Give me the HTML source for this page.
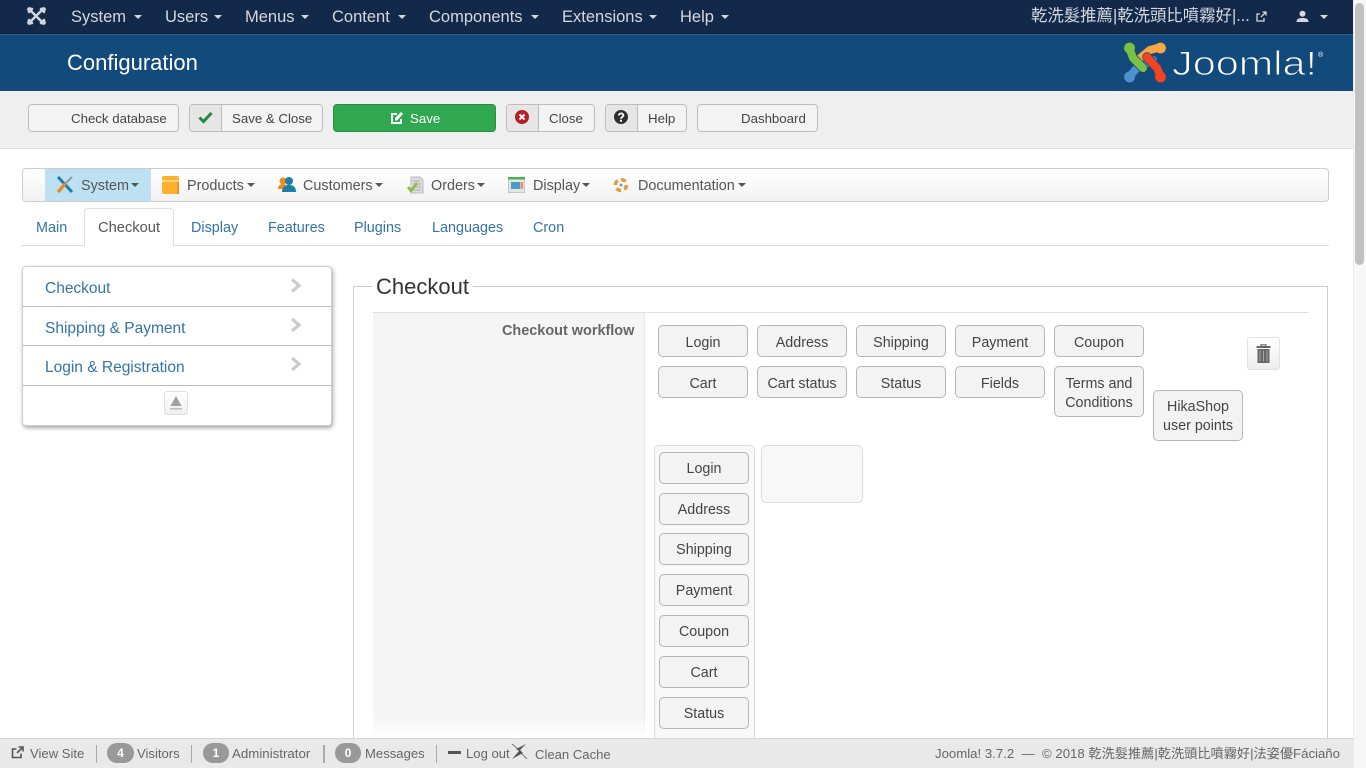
<!DOCTYPE html>
<html><head><meta charset="utf-8"><title>Configuration</title>
<style>
html,body{margin:0;padding:0;width:1366px;height:768px;overflow:hidden;background:#fff}
body{position:relative;font-family:"Liberation Sans","Noto Sans CJK TC",sans-serif;color:#333}
div,span,svg{position:absolute;box-sizing:border-box}
.t{white-space:nowrap}
.n{top:6px;height:22px;line-height:22px;font-size:16.5px;color:#d4d8df;white-space:nowrap}
.car{width:0;height:0;border-left:4.5px solid transparent;border-right:4.5px solid transparent;border-top:4.5px solid #d4d8df}
.tb{top:104px;height:28px;background:#f3f3f3;border:1px solid #bdbdbd;border-radius:4px}
.tbt{top:104px;height:28px;line-height:29px;font-size:13.25px;color:#444;white-space:nowrap}
.ic{top:105px;height:26px;width:32px;background:#e6e6e6;border-right:1px solid #bdbdbd;border-radius:3px 0 0 3px}
.sm{top:176px;height:20px;line-height:20px;font-size:14.4px;color:#555;white-space:nowrap}
.car2{top:183px;width:0;height:0;border-left:4.5px solid transparent;border-right:4.5px solid transparent;border-top:4.5px solid #555}
.tab{top:218px;height:20px;line-height:20px;font-size:14.4px;color:#3373a8;white-space:nowrap}
.sd{left:45px;height:20px;line-height:20px;font-size:15.5px;color:#3373a8;white-space:nowrap}
.hr{left:23px;width:308px;height:1px;background:#bbb}
.b{width:90px;height:32px;background:#f3f3f3;border:1px solid #b5b5b5;border-radius:5px;text-align:center;font-size:14.3px;line-height:32px;color:#444}
.r{line-height:34px}
.b2{height:51px;line-height:19px;padding-top:8px}
.f{top:744px;height:20px;line-height:20px;font-size:13.1px;color:#666;white-space:nowrap}
.bd{top:743px;height:20px;width:27px;border-radius:10px;background:#999;color:#fff;font-size:12px;font-weight:bold;line-height:20px;text-align:center}
.sp{top:745px;width:1px;height:18px;background:#aaa}
</style></head><body>

<!-- top nav -->
<div style="left:0;top:0;width:1353px;height:33px;background:#13294a"></div>
<div style="left:0;top:33px;width:1353px;height:1px;background:#0b1a30"></div>
<svg style="left:26px;top:6px" width="21" height="20" viewBox="0 0 21 20"><g fill="none" stroke="#d0d4da" stroke-width="2.6" stroke-linecap="round"><path d="M4 4 L16 16M16 4 L4 16M3 6 L6 3M15 3l3 3M3 14l3 3M15 17l3-3"/></g><circle cx="3.5" cy="3.5" r="2.4" fill="#d0d4da"/><circle cx="17.5" cy="3.5" r="2.4" fill="#d0d4da"/><circle cx="3.5" cy="16.5" r="2.4" fill="#d0d4da"/><circle cx="17.5" cy="16.5" r="2.4" fill="#d0d4da"/></svg>
<div class="n" style="left:71px">System</div><div class="car" style="left:134px;top:15px"></div>
<div class="n" style="left:165px">Users</div><div class="car" style="left:214px;top:15px"></div>
<div class="n" style="left:245px">Menus</div><div class="car" style="left:301px;top:15px"></div>
<div class="n" style="left:332px">Content</div><div class="car" style="left:398px;top:15px"></div>
<div class="n" style="left:429px">Components</div><div class="car" style="left:531px;top:15px"></div>
<div class="n" style="left:562px">Extensions</div><div class="car" style="left:649px;top:15px"></div>
<div class="n" style="left:680px">Help</div><div class="car" style="left:721px;top:15px"></div>
<div class="n" style="left:1031px;font-size:16.4px;top:5px">乾洗髮推薦|乾洗頭比噴霧好|...</div>
<svg style="left:1255px;top:11px" width="12" height="12" viewBox="0 0 12 12"><path d="M9 7v3H2V3h3M6 6l4.500-4.500M7.500 1H11v3.500" fill="none" stroke="#d4d8df" stroke-width="1.300"/></svg>
<svg style="left:1296px;top:10px" width="13" height="13" viewBox="0 0 13 13"><circle cx="6.500" cy="3.800" r="3" fill="#d4d8df"/><path d="M0.500 12c0-3 2-4 6-4s6 1 6 4z" fill="#d4d8df"/></svg>
<div class="car" style="left:1320px;top:15px"></div>

<!-- header -->
<div style="left:0;top:34px;width:1353px;height:57px;background:#134a7c;border-top:1px solid #2a6496"></div>
<div class="t" style="left:67px;top:49px;height:28px;line-height:28px;font-size:22px;color:#fff">Configuration</div>
<svg style="left:1124px;top:42px" width="42" height="41" viewBox="0 0 42 41">
<g fill="none" stroke-linecap="round" stroke-linejoin="round">
<path d="M5 35 L13 26 L29 18" stroke="#4f91cd" stroke-width="8"/>
<path d="M37 5 L26 8 L14 18" stroke="#134a7c" stroke-width="9.500"/>
<path d="M37 5 L26 8 L14 18" stroke="#f9a541" stroke-width="8"/>
<path d="M37 35 L33 26 L23 15" stroke="#134a7c" stroke-width="9.500"/>
<path d="M37 35 L33 26 L23 15" stroke="#f44321" stroke-width="8"/>
<path d="M5 5 L9 16 L19 26" stroke="#134a7c" stroke-width="9.500"/>
<path d="M5 5 L9 16 L19 26" stroke="#7ac143" stroke-width="8"/>
</g>
<circle cx="5.500" cy="6" r="5.400" fill="#7ac143"/><circle cx="36.500" cy="6" r="5.400" fill="#f9a541"/><circle cx="36.500" cy="35" r="5.400" fill="#f44321"/><circle cx="5.500" cy="35" r="5.400" fill="#4f91cd"/>
</svg>
<svg style="left:1170px;top:44px" width="158" height="36" viewBox="0 0 158 36"><text x="2" y="31" style="font-family:'Liberation Sans',sans-serif" font-size="34" fill="#fff" stroke="#134a7c" stroke-width="1" textLength="145" lengthAdjust="spacingAndGlyphs">Joomla!</text><text x="148" y="13" style="font-family:'Liberation Sans',sans-serif" font-size="7" fill="#fff">®</text></svg>

<!-- toolbar -->
<div style="left:0;top:91px;width:1353px;height:58px;background:#efefef;border-bottom:1px solid #ddd"></div>
<div class="tb" style="left:28px;width:151px"></div><div class="tbt" style="left:71px">Check database</div>
<div class="tb" style="left:189px;width:134px"></div><div class="ic" style="left:190px"></div>
<svg style="left:198px;top:111px" width="15" height="13" viewBox="0 0 15 13"><path d="M1.500 6.500l4 4 8-8.500" fill="none" stroke="#1f8a3e" stroke-width="3"/></svg>
<div class="tbt" style="left:232px">Save &amp; Close</div>
<div class="tb" style="left:333px;width:163px;background:#2fa84f;border-color:#26903f"></div>
<svg style="left:390px;top:111px" width="14" height="14" viewBox="0 0 14 14"><path d="M11 8v4H2V3h5" fill="none" stroke="#fff" stroke-width="2"/><path d="M5 9.500V7l6-6 2 2-6 6.500z" fill="#fff"/></svg>
<div class="tbt" style="left:410px;color:#fff">Save</div>
<div class="tb" style="left:506px;width:89px"></div><div class="ic" style="left:507px"></div>
<svg style="left:515px;top:110px" width="14" height="14" viewBox="0 0 14 14"><circle cx="7" cy="7" r="7" fill="#b32028"/><path d="M4.500 4.500l5 5M9.500 4.500l-5 5" stroke="#fff" stroke-width="2"/></svg>
<div class="tbt" style="left:549px">Close</div>
<div class="tb" style="left:605px;width:82px"></div><div class="ic" style="left:606px"></div>
<svg style="left:614px;top:110px" width="14" height="14" viewBox="0 0 14 14"><circle cx="7" cy="7" r="7" fill="#2f2f2f"/><path d="M4.800 5.500C4.800 2.800 9.400 2.800 9.400 5.400 9.400 7 7 7 7 8.700" fill="none" stroke="#fff" stroke-width="1.800"/><rect x="6" y="9.800" width="2" height="2" fill="#fff"/></svg>
<div class="tbt" style="left:648px">Help</div>
<div class="tb" style="left:697px;width:121px"></div><div class="tbt" style="left:741px">Dashboard</div>

<!-- submenu -->
<div style="left:22px;top:168px;width:1307px;height:34px;border:1px solid #ccc;border-radius:4px;background:linear-gradient(#fff,#f2f2f2)"></div>
<div style="left:45px;top:169px;width:106px;height:32px;background:#bde0f2"></div>
<svg style="left:55px;top:175px" width="20" height="20" viewBox="0 0 20 20"><path d="M3 2l14 15" stroke="#1c7fa6" stroke-width="3"/><path d="M17 2L9 10" stroke="#999" stroke-width="2"/><path d="M10 9L3 17" stroke="#e58a2c" stroke-width="3.500"/></svg>
<div class="sm" style="left:81px">System</div><div class="car2" style="left:131px"></div>
<svg style="left:162px;top:176px" width="17" height="18" viewBox="0 0 17 18"><rect width="17" height="18" rx="2" fill="#ffb02e"/><rect y="4" width="17" height="2" fill="#ffd37a"/><rect x="15" y="6" width="2" height="12" fill="#e8951a"/></svg>
<div class="sm" style="left:187px">Products</div><div class="car2" style="left:247px"></div>
<svg style="left:278px;top:176px" width="18" height="17" viewBox="0 0 18 17"><circle cx="5" cy="5" r="3.500" fill="#f08a1c"/><path d="M0 13c0-4 3-5 5-5s4 1 4 5z" fill="#f08a1c"/><circle cx="11" cy="5" r="4" fill="#1c7fa6"/><path d="M4 16c0-6 4-7 7-7s7 1 7 7z" fill="#1c7fa6"/></svg>
<div class="sm" style="left:303px">Customers</div><div class="car2" style="left:375px"></div>
<svg style="left:407px;top:176px" width="17" height="18" viewBox="0 0 17 18"><path d="M4 1h9l3 3v13H4z" fill="#ddd" stroke="#bbb"/><path d="M6 5h7M6 8h8M6 11h8M6 14h8" stroke="#aaa"/><path d="M1 11l3 4 6-8" fill="none" stroke="#8dbb3c" stroke-width="2.500"/></svg>
<div class="sm" style="left:431px">Orders</div><div class="car2" style="left:477px"></div>
<svg style="left:508px;top:177px" width="17" height="16" viewBox="0 0 17 16"><rect width="17" height="16" fill="#dfe7e7" stroke="#aaa"/><rect width="17" height="2.500" fill="#4caf50"/><rect x="3" y="5" width="9" height="7" fill="#4a9cc6"/><rect x="12.500" y="5" width="2.500" height="7" fill="#ee8b74"/></svg>
<div class="sm" style="left:533px">Display</div><div class="car2" style="left:582px"></div>
<svg style="left:613px;top:177px" width="16" height="16" viewBox="0 0 16 16"><circle cx="8" cy="8" r="5.500" fill="none" stroke="#e99a3c" stroke-width="3.500" stroke-dasharray="5 3.600"/><circle cx="8" cy="8" r="1.500" fill="#6a9fc0"/></svg>
<div class="sm" style="left:638px">Documentation</div><div class="car2" style="left:738px"></div>

<!-- tabs -->
<div style="left:22px;top:245px;width:1307px;height:1px;background:#ddd"></div>
<div style="left:84px;top:208px;width:90px;height:38px;background:#fff;border:1px solid #ddd;border-bottom:0;border-radius:4px 4px 0 0"></div>
<div class="tab" style="left:36px">Main</div>
<div class="tab" style="left:98px;color:#555;font-size:14.7px">Checkout</div>
<div class="tab" style="left:191px">Display</div>
<div class="tab" style="left:268px">Features</div>
<div class="tab" style="left:354px">Plugins</div>
<div class="tab" style="left:432px">Languages</div>
<div class="tab" style="left:533px">Cron</div>

<!-- sidebar -->
<div style="left:22px;top:266px;width:310px;height:160px;background:#fff;border:1px solid #ccc;border-radius:4px;box-shadow:1px 2px 4px rgba(0,0,0,.35)"></div>
<div class="sd" style="top:279px">Checkout</div>
<div class="hr" style="top:306px"></div>
<div class="sd" style="top:319px">Shipping &amp; Payment</div>
<div class="hr" style="top:345px"></div>
<div class="sd" style="top:358px">Login &amp; Registration</div>
<div class="hr" style="top:385px"></div>
<svg style="left:290px;top:278px" width="12" height="96" viewBox="0 0 12 96"><path d="M2 1.500l7 6-7 6M2 41l7 6-7 6M2 80l7 6-7 6" fill="none" stroke="#ccc" stroke-width="3.200"/></svg>
<div style="left:164px;top:391px;width:24px;height:24px;background:linear-gradient(#fff,#eee);border:1px solid #e0e0e0;border-radius:3px"></div>
<svg style="left:169px;top:396px" width="14" height="14" viewBox="0 0 14 14"><path d="M7 0L12.500 10H1.500z" fill="#a0a0a0"/><rect x="1" y="12" width="12" height="1.500" fill="#bbb"/></svg>

<!-- fieldset -->
<div style="left:353px;top:286px;width:975px;height:470px;border:1px solid #ccc"></div>
<div class="t" style="left:372px;top:273px;height:28px;line-height:28px;font-size:22px;padding:0 4px;background:#fff;color:#333">Checkout</div>
<div style="left:373px;top:312px;width:272px;height:430px;background:#f5f5f5;border-right:1px solid #e6e6e6"></div>
<div style="left:373px;top:312px;width:935px;height:1px;background:#ddd"></div>
<div class="t" style="left:502px;top:322px;height:18px;line-height:18px;font-size:14.45px;font-weight:bold;color:#666">Checkout workflow</div>

<div class="b r" style="left:658px;top:325px">Login</div>
<div class="b r" style="left:757px;top:325px">Address</div>
<div class="b r" style="left:856px;top:325px">Shipping</div>
<div class="b r" style="left:955px;top:325px">Payment</div>
<div class="b r" style="left:1054px;top:325px">Coupon</div>
<div class="b r" style="left:658px;top:366px">Cart</div>
<div class="b r" style="left:757px;top:366px">Cart status</div>
<div class="b r" style="left:856px;top:366px">Status</div>
<div class="b r" style="left:955px;top:366px">Fields</div>
<div class="b b2" style="left:1054px;top:366px">Terms and<br>Conditions</div>
<div class="b b2" style="left:1153px;top:390px;padding-top:7px">HikaShop<br>user points</div>
<div style="left:1247px;top:337px;width:33px;height:33px;background:linear-gradient(#fff,#eee);border:1px solid #e2e2e2;border-radius:3px"></div>
<svg style="left:1256px;top:344px" width="15" height="19" viewBox="0 0 15 19"><path d="M5 2V.800h5V2" fill="none" stroke="#666" stroke-width="1.200"/><rect x="0.500" y="2" width="14" height="2" fill="#666"/><rect x="1.500" y="5" width="12" height="14" fill="#666"/><path d="M4 6.500v11M7.500 6.500v11M11 6.500v11" stroke="#aaa" stroke-width="1"/></svg>

<div style="left:654px;top:445px;width:101px;height:310px;background:#f8f8f8;border:1px solid #ddd;border-radius:5px 5px 0 0"></div>
<div style="left:761px;top:445px;width:102px;height:58px;background:#f8f8f8;border:1px solid #ddd;border-radius:5px"></div>
<div class="b" style="left:659px;top:452px">Login</div>
<div class="b" style="left:659px;top:493px">Address</div>
<div class="b" style="left:659px;top:533px">Shipping</div>
<div class="b" style="left:659px;top:574px">Payment</div>
<div class="b" style="left:659px;top:615px">Coupon</div>
<div class="b" style="left:659px;top:656px">Cart</div>
<div class="b" style="left:659px;top:697px">Status</div>

<div style="left:373px;top:715px;width:272px;height:23px;background:linear-gradient(rgba(255,255,255,0),#fff)"></div>

<!-- footer -->
<div style="left:0;top:738px;width:1353px;height:30px;background:#e9e9e9;border-top:1px solid #d5d5d5"></div>
<svg style="left:11px;top:746px" width="13" height="13" viewBox="0 0 13 13"><path d="M10 7.500V11.500H1.500V3H5.500M6 7L11 2M7.500 1H12V5.500" fill="none" stroke="#555" stroke-width="1.600"/></svg>
<div class="f" style="left:30px">View Site</div>
<div class="sp" style="left:96px"></div>
<div class="bd" style="left:107px">4</div><div class="f" style="left:137px">Visitors</div>
<div class="sp" style="left:191px"></div>
<div class="bd" style="left:203px;width:26px">1</div><div class="f" style="left:232px;font-size:13.3px">Administrator</div>
<div class="sp" style="left:323px;width:2px"></div>
<div class="bd" style="left:335px;width:26px">0</div><div class="f" style="left:365px">Messages</div>
<div class="sp" style="left:436px"></div>
<div style="left:448px;top:751px;width:13px;height:3px;background:#555"></div>
<div class="f" style="left:466px">Log out</div>
<svg style="left:511px;top:743px" width="17" height="17" viewBox="0 0 17 17"><path d="M1 1l7 6M16 16l-6-6" stroke="#777" stroke-width="1" fill="none"/><path d="M15 1L5 6l3 2-7 8 11-6-3-3z" fill="#555"/></svg>
<div class="f" style="left:535px;top:745px">Clean Cache</div>
<div class="f" style="left:935px;font-size:13.2px">Joomla! 3.7.2&nbsp;&nbsp;—&nbsp;&nbsp;© 2018 乾洗髮推薦|乾洗頭比噴霧好|法姿優Fáciaño</div>

<!-- scrollbar -->
<div style="left:1353px;top:0;width:13px;height:768px;background:#f7f7f7;border-left:1px solid #ececec"></div>
<div style="left:1355px;top:3px;width:9px;height:262px;background:#c1c1c1;border-radius:5px"></div>
</body></html>
